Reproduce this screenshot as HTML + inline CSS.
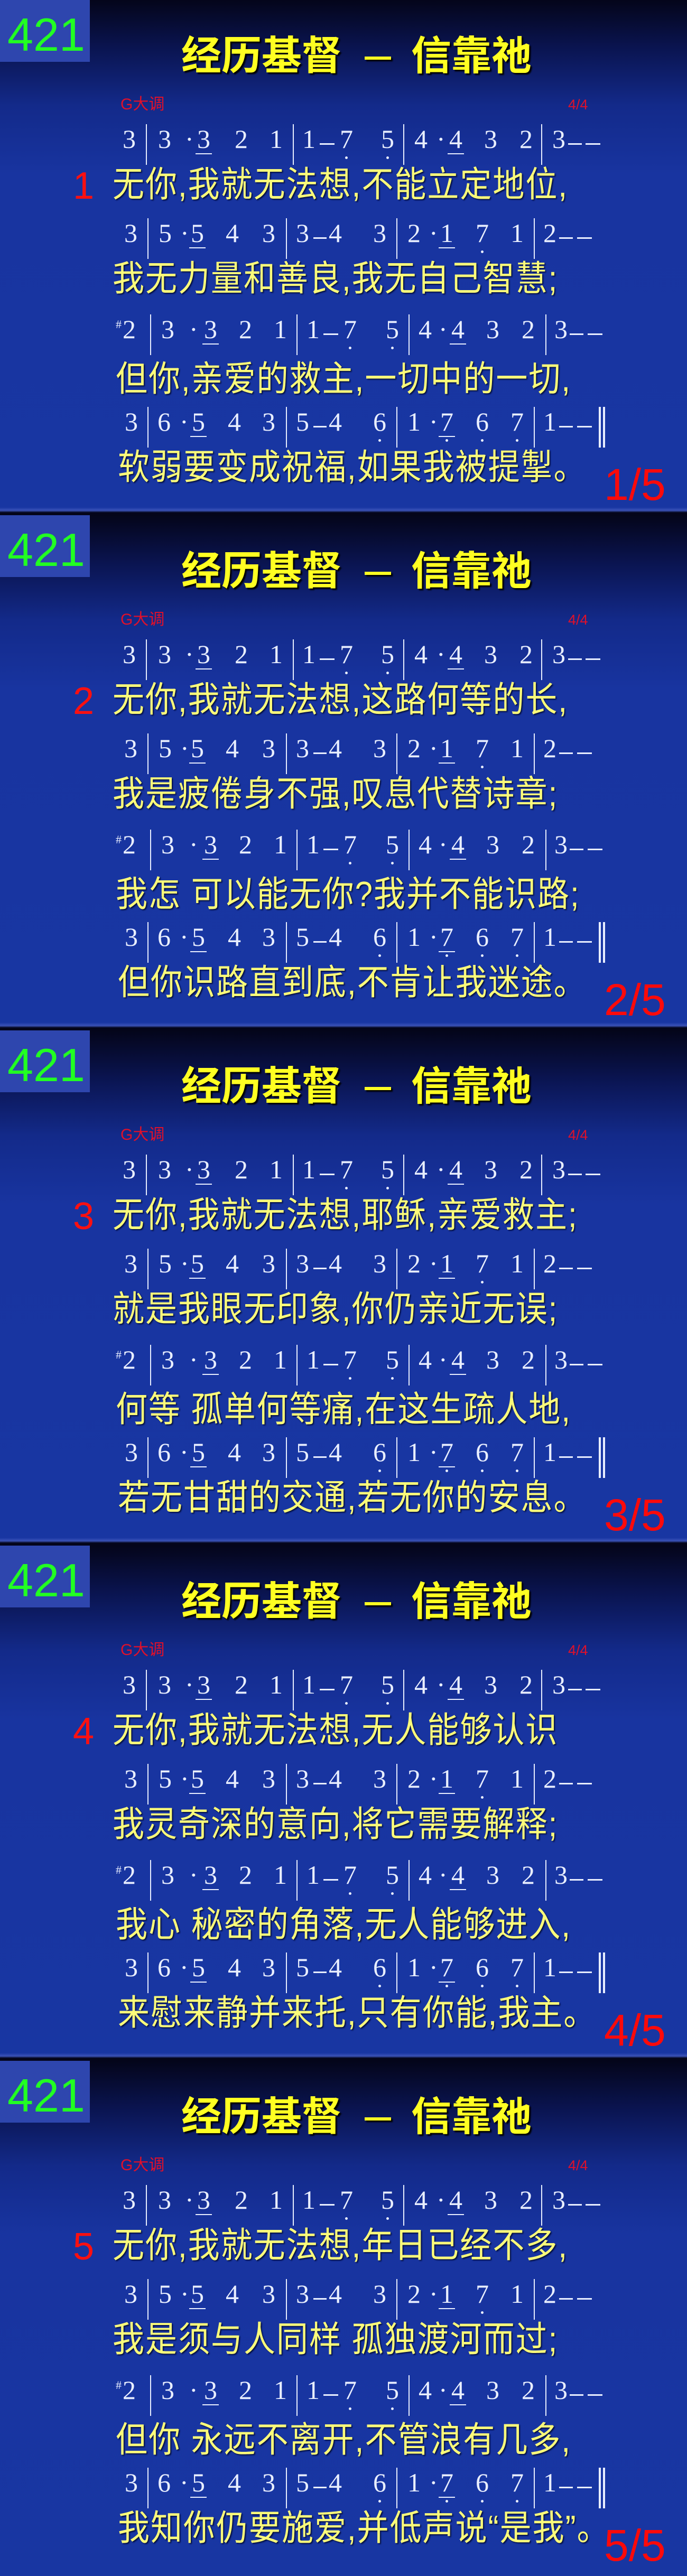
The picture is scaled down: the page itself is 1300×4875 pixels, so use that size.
<!DOCTYPE html>
<html><head><meta charset="utf-8">
<style>
*{margin:0;padding:0;box-sizing:border-box}
body{width:1300px;background:#1a34a0;overflow:hidden}
.s{position:relative;width:1300px;height:975px;overflow:hidden;background:linear-gradient(180deg,#04051a 0px,#0a1450 90px,#132a8a 200px,#1834a0 330px,#1836a2 960px,#3a52b8 966px,#04051a 970px)}
.s.last{background:linear-gradient(180deg,#04051a 0px,#0a1450 90px,#132a8a 200px,#1834a0 330px,#1836a2 975px)}
.box{position:absolute;left:0;top:0;width:170px;height:117px;background:#2e46ae}
.num{position:absolute;left:14px;top:16px;font:88px/100px "Liberation Sans",sans-serif;color:#22ff22}
.t{position:absolute;top:62px;font:bold 76px/90px "Liberation Sans","Noto Sans CJK SC",sans-serif;color:#ffff22;text-shadow:3px 3px 2px #000}
.td{position:absolute;left:690px;top:107px;width:50px;height:6px;background:#ffff22;box-shadow:3px 3px 2px #000}
.k{position:absolute;top:180px;font:30px/36px "Liberation Sans","Noto Sans CJK SC",sans-serif;color:#e0102a}
.r{position:absolute;left:0;width:1300px;height:80px}
.n{position:absolute;top:3px;font:50px/50px "Liberation Serif",serif;color:#e8eeff}
.u::after{content:"";position:absolute;left:-3px;right:-3px;top:52px;height:2px;background:#e8eeff}
.o::before{content:"";position:absolute;left:10px;top:58px;width:5px;height:5px;border-radius:50%;background:#e8eeff}
.b{position:absolute;top:0;width:2px;height:77px;background:#e8eeff}
.bb{position:absolute;top:0;width:4px;height:77px;background:#e8eeff}
.h{position:absolute;top:36px;height:3px;background:#e8eeff}
.sh{position:absolute;top:8px;font:22px/22px "Liberation Serif",serif;color:#e8eeff}
.l{position:absolute;font:60px/60px "Liberation Sans","Noto Sans CJK SC",sans-serif;color:#fbfb7a;letter-spacing:2px;text-shadow:2px 2px 2px #061040;white-space:nowrap;transform:scaleY(1.12);transform-origin:0 0}
.v{position:absolute;left:138px;top:312px;font:72px/80px "Liberation Sans",sans-serif;color:#ff1010}
.p{position:absolute;left:1143px;top:872px;font:84px/90px "Liberation Sans",sans-serif;color:#ff0a0a}
</style></head><body>

<!-- SLIDE 1 -->
<div class="s">
<div class="box"></div><div class="num">421</div>
<div class="t" style="left:343px">经历基督</div><div class="td"></div><div class="t" style="left:778px">信靠祂</div>
<div class="k" style="left:228px">G大调</div><div class="k" style="left:1075px;font-size:27px">4/4</div>
<div class="r" style="top:235px"><span class="n" style="left:232px">3</span><i class="b" style="left:276px"></i><span class="n" style="left:299px">3</span><span class="n" style="left:350px">·</span><span class="n u" style="left:373px">3</span><span class="n" style="left:444px">2</span><span class="n" style="left:510px">1</span><i class="b" style="left:554px"></i><span class="n" style="left:572px">1</span><i class="h" style="left:605px;width:28px"></i><span class="n o" style="left:643px">7</span><span class="n o" style="left:721px">5</span><i class="b" style="left:763px"></i><span class="n" style="left:784px">4</span><span class="n" style="left:826px">·</span><span class="n u" style="left:850px">4</span><span class="n" style="left:916px">3</span><span class="n" style="left:983px">2</span><i class="b" style="left:1024px"></i><span class="n" style="left:1045px">3</span><i class="h" style="left:1075px;width:26px"></i><i class="h" style="left:1108px;width:28px"></i></div>
<div class="v">1</div>
<div class="l" style="left:213px;top:316px">无你,我就无法想,不能立定地位,</div>
<div class="r" style="top:413px"><span class="n" style="left:235px">3</span><i class="b" style="left:279px"></i><span class="n" style="left:300px">5</span><span class="n" style="left:341px">·</span><span class="n u" style="left:361px">5</span><span class="n" style="left:427px">4</span><span class="n" style="left:496px">3</span><i class="b" style="left:541px"></i><span class="n" style="left:560px">3</span><i class="h" style="left:593px;width:25px"></i><span class="n" style="left:622px">4</span><span class="n" style="left:706px">3</span><i class="b" style="left:750px"></i><span class="n" style="left:771px">2</span><span class="n" style="left:812px">·</span><span class="n u" style="left:833px">1</span><span class="n o" style="left:900px">7</span><span class="n" style="left:966px">1</span><i class="b" style="left:1010px"></i><span class="n" style="left:1028px">2</span><i class="h" style="left:1058px;width:26px"></i><i class="h" style="left:1092px;width:28px"></i></div>
<div class="l" style="left:213px;top:494px">我无力量和善良,我无自己智慧;</div>
<div class="r" style="top:595px"><span class="sh" style="left:219px">#</span><span class="n" style="left:232px">2</span><i class="b" style="left:284px"></i><span class="n" style="left:305px">3</span><span class="n" style="left:358px">·</span><span class="n u" style="left:386px">3</span><span class="n" style="left:452px">2</span><span class="n" style="left:518px">1</span><i class="b" style="left:561px"></i><span class="n" style="left:580px">1</span><i class="h" style="left:612px;width:28px"></i><span class="n o" style="left:650px">7</span><span class="n o" style="left:730px">5</span><i class="b" style="left:773px"></i><span class="n" style="left:792px">4</span><span class="n" style="left:830px">·</span><span class="n u" style="left:854px">4</span><span class="n" style="left:920px">3</span><span class="n" style="left:987px">2</span><i class="b" style="left:1032px"></i><span class="n" style="left:1049px">3</span><i class="h" style="left:1078px;width:26px"></i><i class="h" style="left:1112px;width:28px"></i></div>
<div class="l" style="left:219px;top:684px">但你,亲爱的救主,一切中的一切,</div>
<div class="r" style="top:770px"><span class="n" style="left:236px">3</span><i class="b" style="left:279px"></i><span class="n" style="left:298px">6</span><span class="n" style="left:340px">·</span><span class="n u" style="left:363px">5</span><span class="n" style="left:431px">4</span><span class="n" style="left:496px">3</span><i class="b" style="left:541px"></i><span class="n" style="left:560px">5</span><i class="h" style="left:593px;width:25px"></i><span class="n" style="left:622px">4</span><span class="n o" style="left:706px">6</span><i class="b" style="left:750px"></i><span class="n" style="left:771px">1</span><span class="n" style="left:812px">·</span><span class="n u o" style="left:833px">7</span><span class="n o" style="left:900px">6</span><span class="n o" style="left:966px">7</span><i class="b" style="left:1010px"></i><span class="n" style="left:1028px">1</span><i class="h" style="left:1058px;width:26px"></i><i class="h" style="left:1092px;width:28px"></i><i class="bb" style="left:1133px"></i><i class="bb" style="left:1141px"></i></div>
<div class="l" style="left:223px;top:851px">软弱要变成祝福,如果我被提掣。</div>
<div class="p">1/5</div>
</div>

<!-- SLIDE 2 -->
<div class="s">
<div class="box"></div><div class="num">421</div>
<div class="t" style="left:343px">经历基督</div><div class="td"></div><div class="t" style="left:778px">信靠祂</div>
<div class="k" style="left:228px">G大调</div><div class="k" style="left:1075px;font-size:27px">4/4</div>
<div class="r" style="top:235px"><span class="n" style="left:232px">3</span><i class="b" style="left:276px"></i><span class="n" style="left:299px">3</span><span class="n" style="left:350px">·</span><span class="n u" style="left:373px">3</span><span class="n" style="left:444px">2</span><span class="n" style="left:510px">1</span><i class="b" style="left:554px"></i><span class="n" style="left:572px">1</span><i class="h" style="left:605px;width:28px"></i><span class="n o" style="left:643px">7</span><span class="n o" style="left:721px">5</span><i class="b" style="left:763px"></i><span class="n" style="left:784px">4</span><span class="n" style="left:826px">·</span><span class="n u" style="left:850px">4</span><span class="n" style="left:916px">3</span><span class="n" style="left:983px">2</span><i class="b" style="left:1024px"></i><span class="n" style="left:1045px">3</span><i class="h" style="left:1075px;width:26px"></i><i class="h" style="left:1108px;width:28px"></i></div>
<div class="v">2</div>
<div class="l" style="left:213px;top:316px">无你,我就无法想,这路何等的长,</div>
<div class="r" style="top:413px"><span class="n" style="left:235px">3</span><i class="b" style="left:279px"></i><span class="n" style="left:300px">5</span><span class="n" style="left:341px">·</span><span class="n u" style="left:361px">5</span><span class="n" style="left:427px">4</span><span class="n" style="left:496px">3</span><i class="b" style="left:541px"></i><span class="n" style="left:560px">3</span><i class="h" style="left:593px;width:25px"></i><span class="n" style="left:622px">4</span><span class="n" style="left:706px">3</span><i class="b" style="left:750px"></i><span class="n" style="left:771px">2</span><span class="n" style="left:812px">·</span><span class="n u" style="left:833px">1</span><span class="n o" style="left:900px">7</span><span class="n" style="left:966px">1</span><i class="b" style="left:1010px"></i><span class="n" style="left:1028px">2</span><i class="h" style="left:1058px;width:26px"></i><i class="h" style="left:1092px;width:28px"></i></div>
<div class="l" style="left:213px;top:494px">我是疲倦身不强,叹息代替诗章;</div>
<div class="r" style="top:595px"><span class="sh" style="left:219px">#</span><span class="n" style="left:232px">2</span><i class="b" style="left:284px"></i><span class="n" style="left:305px">3</span><span class="n" style="left:358px">·</span><span class="n u" style="left:386px">3</span><span class="n" style="left:452px">2</span><span class="n" style="left:518px">1</span><i class="b" style="left:561px"></i><span class="n" style="left:580px">1</span><i class="h" style="left:612px;width:28px"></i><span class="n o" style="left:650px">7</span><span class="n o" style="left:730px">5</span><i class="b" style="left:773px"></i><span class="n" style="left:792px">4</span><span class="n" style="left:830px">·</span><span class="n u" style="left:854px">4</span><span class="n" style="left:920px">3</span><span class="n" style="left:987px">2</span><i class="b" style="left:1032px"></i><span class="n" style="left:1049px">3</span><i class="h" style="left:1078px;width:26px"></i><i class="h" style="left:1112px;width:28px"></i></div>
<div class="l" style="left:219px;top:684px">我怎 可以能无你?我并不能识路;</div>
<div class="r" style="top:770px"><span class="n" style="left:236px">3</span><i class="b" style="left:279px"></i><span class="n" style="left:298px">6</span><span class="n" style="left:340px">·</span><span class="n u" style="left:363px">5</span><span class="n" style="left:431px">4</span><span class="n" style="left:496px">3</span><i class="b" style="left:541px"></i><span class="n" style="left:560px">5</span><i class="h" style="left:593px;width:25px"></i><span class="n" style="left:622px">4</span><span class="n o" style="left:706px">6</span><i class="b" style="left:750px"></i><span class="n" style="left:771px">1</span><span class="n" style="left:812px">·</span><span class="n u o" style="left:833px">7</span><span class="n o" style="left:900px">6</span><span class="n o" style="left:966px">7</span><i class="b" style="left:1010px"></i><span class="n" style="left:1028px">1</span><i class="h" style="left:1058px;width:26px"></i><i class="h" style="left:1092px;width:28px"></i><i class="bb" style="left:1133px"></i><i class="bb" style="left:1141px"></i></div>
<div class="l" style="left:223px;top:851px">但你识路直到底,不肯让我迷途。</div>
<div class="p">2/5</div>
</div>

<!-- SLIDE 3 -->
<div class="s">
<div class="box"></div><div class="num">421</div>
<div class="t" style="left:343px">经历基督</div><div class="td"></div><div class="t" style="left:778px">信靠祂</div>
<div class="k" style="left:228px">G大调</div><div class="k" style="left:1075px;font-size:27px">4/4</div>
<div class="r" style="top:235px"><span class="n" style="left:232px">3</span><i class="b" style="left:276px"></i><span class="n" style="left:299px">3</span><span class="n" style="left:350px">·</span><span class="n u" style="left:373px">3</span><span class="n" style="left:444px">2</span><span class="n" style="left:510px">1</span><i class="b" style="left:554px"></i><span class="n" style="left:572px">1</span><i class="h" style="left:605px;width:28px"></i><span class="n o" style="left:643px">7</span><span class="n o" style="left:721px">5</span><i class="b" style="left:763px"></i><span class="n" style="left:784px">4</span><span class="n" style="left:826px">·</span><span class="n u" style="left:850px">4</span><span class="n" style="left:916px">3</span><span class="n" style="left:983px">2</span><i class="b" style="left:1024px"></i><span class="n" style="left:1045px">3</span><i class="h" style="left:1075px;width:26px"></i><i class="h" style="left:1108px;width:28px"></i></div>
<div class="v">3</div>
<div class="l" style="left:213px;top:316px">无你,我就无法想,耶稣,亲爱救主;</div>
<div class="r" style="top:413px"><span class="n" style="left:235px">3</span><i class="b" style="left:279px"></i><span class="n" style="left:300px">5</span><span class="n" style="left:341px">·</span><span class="n u" style="left:361px">5</span><span class="n" style="left:427px">4</span><span class="n" style="left:496px">3</span><i class="b" style="left:541px"></i><span class="n" style="left:560px">3</span><i class="h" style="left:593px;width:25px"></i><span class="n" style="left:622px">4</span><span class="n" style="left:706px">3</span><i class="b" style="left:750px"></i><span class="n" style="left:771px">2</span><span class="n" style="left:812px">·</span><span class="n u" style="left:833px">1</span><span class="n o" style="left:900px">7</span><span class="n" style="left:966px">1</span><i class="b" style="left:1010px"></i><span class="n" style="left:1028px">2</span><i class="h" style="left:1058px;width:26px"></i><i class="h" style="left:1092px;width:28px"></i></div>
<div class="l" style="left:213px;top:494px">就是我眼无印象,你仍亲近无误;</div>
<div class="r" style="top:595px"><span class="sh" style="left:219px">#</span><span class="n" style="left:232px">2</span><i class="b" style="left:284px"></i><span class="n" style="left:305px">3</span><span class="n" style="left:358px">·</span><span class="n u" style="left:386px">3</span><span class="n" style="left:452px">2</span><span class="n" style="left:518px">1</span><i class="b" style="left:561px"></i><span class="n" style="left:580px">1</span><i class="h" style="left:612px;width:28px"></i><span class="n o" style="left:650px">7</span><span class="n o" style="left:730px">5</span><i class="b" style="left:773px"></i><span class="n" style="left:792px">4</span><span class="n" style="left:830px">·</span><span class="n u" style="left:854px">4</span><span class="n" style="left:920px">3</span><span class="n" style="left:987px">2</span><i class="b" style="left:1032px"></i><span class="n" style="left:1049px">3</span><i class="h" style="left:1078px;width:26px"></i><i class="h" style="left:1112px;width:28px"></i></div>
<div class="l" style="left:219px;top:684px">何等 孤单何等痛,在这生疏人地,</div>
<div class="r" style="top:770px"><span class="n" style="left:236px">3</span><i class="b" style="left:279px"></i><span class="n" style="left:298px">6</span><span class="n" style="left:340px">·</span><span class="n u" style="left:363px">5</span><span class="n" style="left:431px">4</span><span class="n" style="left:496px">3</span><i class="b" style="left:541px"></i><span class="n" style="left:560px">5</span><i class="h" style="left:593px;width:25px"></i><span class="n" style="left:622px">4</span><span class="n o" style="left:706px">6</span><i class="b" style="left:750px"></i><span class="n" style="left:771px">1</span><span class="n" style="left:812px">·</span><span class="n u o" style="left:833px">7</span><span class="n o" style="left:900px">6</span><span class="n o" style="left:966px">7</span><i class="b" style="left:1010px"></i><span class="n" style="left:1028px">1</span><i class="h" style="left:1058px;width:26px"></i><i class="h" style="left:1092px;width:28px"></i><i class="bb" style="left:1133px"></i><i class="bb" style="left:1141px"></i></div>
<div class="l" style="left:223px;top:851px">若无甘甜的交通,若无你的安息。</div>
<div class="p">3/5</div>
</div>

<!-- SLIDE 4 -->
<div class="s">
<div class="box"></div><div class="num">421</div>
<div class="t" style="left:343px">经历基督</div><div class="td"></div><div class="t" style="left:778px">信靠祂</div>
<div class="k" style="left:228px">G大调</div><div class="k" style="left:1075px;font-size:27px">4/4</div>
<div class="r" style="top:235px"><span class="n" style="left:232px">3</span><i class="b" style="left:276px"></i><span class="n" style="left:299px">3</span><span class="n" style="left:350px">·</span><span class="n u" style="left:373px">3</span><span class="n" style="left:444px">2</span><span class="n" style="left:510px">1</span><i class="b" style="left:554px"></i><span class="n" style="left:572px">1</span><i class="h" style="left:605px;width:28px"></i><span class="n o" style="left:643px">7</span><span class="n o" style="left:721px">5</span><i class="b" style="left:763px"></i><span class="n" style="left:784px">4</span><span class="n" style="left:826px">·</span><span class="n u" style="left:850px">4</span><span class="n" style="left:916px">3</span><span class="n" style="left:983px">2</span><i class="b" style="left:1024px"></i><span class="n" style="left:1045px">3</span><i class="h" style="left:1075px;width:26px"></i><i class="h" style="left:1108px;width:28px"></i></div>
<div class="v">4</div>
<div class="l" style="left:213px;top:316px">无你,我就无法想,无人能够认识</div>
<div class="r" style="top:413px"><span class="n" style="left:235px">3</span><i class="b" style="left:279px"></i><span class="n" style="left:300px">5</span><span class="n" style="left:341px">·</span><span class="n u" style="left:361px">5</span><span class="n" style="left:427px">4</span><span class="n" style="left:496px">3</span><i class="b" style="left:541px"></i><span class="n" style="left:560px">3</span><i class="h" style="left:593px;width:25px"></i><span class="n" style="left:622px">4</span><span class="n" style="left:706px">3</span><i class="b" style="left:750px"></i><span class="n" style="left:771px">2</span><span class="n" style="left:812px">·</span><span class="n u" style="left:833px">1</span><span class="n o" style="left:900px">7</span><span class="n" style="left:966px">1</span><i class="b" style="left:1010px"></i><span class="n" style="left:1028px">2</span><i class="h" style="left:1058px;width:26px"></i><i class="h" style="left:1092px;width:28px"></i></div>
<div class="l" style="left:213px;top:494px">我灵奇深的意向,将它需要解释;</div>
<div class="r" style="top:595px"><span class="sh" style="left:219px">#</span><span class="n" style="left:232px">2</span><i class="b" style="left:284px"></i><span class="n" style="left:305px">3</span><span class="n" style="left:358px">·</span><span class="n u" style="left:386px">3</span><span class="n" style="left:452px">2</span><span class="n" style="left:518px">1</span><i class="b" style="left:561px"></i><span class="n" style="left:580px">1</span><i class="h" style="left:612px;width:28px"></i><span class="n o" style="left:650px">7</span><span class="n o" style="left:730px">5</span><i class="b" style="left:773px"></i><span class="n" style="left:792px">4</span><span class="n" style="left:830px">·</span><span class="n u" style="left:854px">4</span><span class="n" style="left:920px">3</span><span class="n" style="left:987px">2</span><i class="b" style="left:1032px"></i><span class="n" style="left:1049px">3</span><i class="h" style="left:1078px;width:26px"></i><i class="h" style="left:1112px;width:28px"></i></div>
<div class="l" style="left:219px;top:684px">我心 秘密的角落,无人能够进入,</div>
<div class="r" style="top:770px"><span class="n" style="left:236px">3</span><i class="b" style="left:279px"></i><span class="n" style="left:298px">6</span><span class="n" style="left:340px">·</span><span class="n u" style="left:363px">5</span><span class="n" style="left:431px">4</span><span class="n" style="left:496px">3</span><i class="b" style="left:541px"></i><span class="n" style="left:560px">5</span><i class="h" style="left:593px;width:25px"></i><span class="n" style="left:622px">4</span><span class="n o" style="left:706px">6</span><i class="b" style="left:750px"></i><span class="n" style="left:771px">1</span><span class="n" style="left:812px">·</span><span class="n u o" style="left:833px">7</span><span class="n o" style="left:900px">6</span><span class="n o" style="left:966px">7</span><i class="b" style="left:1010px"></i><span class="n" style="left:1028px">1</span><i class="h" style="left:1058px;width:26px"></i><i class="h" style="left:1092px;width:28px"></i><i class="bb" style="left:1133px"></i><i class="bb" style="left:1141px"></i></div>
<div class="l" style="left:223px;top:851px">来慰来静并来托,只有你能,我主。</div>
<div class="p">4/5</div>
</div>

<!-- SLIDE 5 -->
<div class="s last">
<div class="box"></div><div class="num">421</div>
<div class="t" style="left:343px">经历基督</div><div class="td"></div><div class="t" style="left:778px">信靠祂</div>
<div class="k" style="left:228px">G大调</div><div class="k" style="left:1075px;font-size:27px">4/4</div>
<div class="r" style="top:235px"><span class="n" style="left:232px">3</span><i class="b" style="left:276px"></i><span class="n" style="left:299px">3</span><span class="n" style="left:350px">·</span><span class="n u" style="left:373px">3</span><span class="n" style="left:444px">2</span><span class="n" style="left:510px">1</span><i class="b" style="left:554px"></i><span class="n" style="left:572px">1</span><i class="h" style="left:605px;width:28px"></i><span class="n o" style="left:643px">7</span><span class="n o" style="left:721px">5</span><i class="b" style="left:763px"></i><span class="n" style="left:784px">4</span><span class="n" style="left:826px">·</span><span class="n u" style="left:850px">4</span><span class="n" style="left:916px">3</span><span class="n" style="left:983px">2</span><i class="b" style="left:1024px"></i><span class="n" style="left:1045px">3</span><i class="h" style="left:1075px;width:26px"></i><i class="h" style="left:1108px;width:28px"></i></div>
<div class="v">5</div>
<div class="l" style="left:213px;top:316px">无你,我就无法想,年日已经不多,</div>
<div class="r" style="top:413px"><span class="n" style="left:235px">3</span><i class="b" style="left:279px"></i><span class="n" style="left:300px">5</span><span class="n" style="left:341px">·</span><span class="n u" style="left:361px">5</span><span class="n" style="left:427px">4</span><span class="n" style="left:496px">3</span><i class="b" style="left:541px"></i><span class="n" style="left:560px">3</span><i class="h" style="left:593px;width:25px"></i><span class="n" style="left:622px">4</span><span class="n" style="left:706px">3</span><i class="b" style="left:750px"></i><span class="n" style="left:771px">2</span><span class="n" style="left:812px">·</span><span class="n u" style="left:833px">1</span><span class="n o" style="left:900px">7</span><span class="n" style="left:966px">1</span><i class="b" style="left:1010px"></i><span class="n" style="left:1028px">2</span><i class="h" style="left:1058px;width:26px"></i><i class="h" style="left:1092px;width:28px"></i></div>
<div class="l" style="left:213px;top:494px">我是须与人同样 孤独渡河而过;</div>
<div class="r" style="top:595px"><span class="sh" style="left:219px">#</span><span class="n" style="left:232px">2</span><i class="b" style="left:284px"></i><span class="n" style="left:305px">3</span><span class="n" style="left:358px">·</span><span class="n u" style="left:386px">3</span><span class="n" style="left:452px">2</span><span class="n" style="left:518px">1</span><i class="b" style="left:561px"></i><span class="n" style="left:580px">1</span><i class="h" style="left:612px;width:28px"></i><span class="n o" style="left:650px">7</span><span class="n o" style="left:730px">5</span><i class="b" style="left:773px"></i><span class="n" style="left:792px">4</span><span class="n" style="left:830px">·</span><span class="n u" style="left:854px">4</span><span class="n" style="left:920px">3</span><span class="n" style="left:987px">2</span><i class="b" style="left:1032px"></i><span class="n" style="left:1049px">3</span><i class="h" style="left:1078px;width:26px"></i><i class="h" style="left:1112px;width:28px"></i></div>
<div class="l" style="left:219px;top:684px">但你 永远不离开,不管浪有几多,</div>
<div class="r" style="top:770px"><span class="n" style="left:236px">3</span><i class="b" style="left:279px"></i><span class="n" style="left:298px">6</span><span class="n" style="left:340px">·</span><span class="n u" style="left:363px">5</span><span class="n" style="left:431px">4</span><span class="n" style="left:496px">3</span><i class="b" style="left:541px"></i><span class="n" style="left:560px">5</span><i class="h" style="left:593px;width:25px"></i><span class="n" style="left:622px">4</span><span class="n o" style="left:706px">6</span><i class="b" style="left:750px"></i><span class="n" style="left:771px">1</span><span class="n" style="left:812px">·</span><span class="n u o" style="left:833px">7</span><span class="n o" style="left:900px">6</span><span class="n o" style="left:966px">7</span><i class="b" style="left:1010px"></i><span class="n" style="left:1028px">1</span><i class="h" style="left:1058px;width:26px"></i><i class="h" style="left:1092px;width:28px"></i><i class="bb" style="left:1133px"></i><i class="bb" style="left:1141px"></i></div>
<div class="l" style="left:223px;top:851px">我知你仍要施爱,并低声说“是我”。</div>
<div class="p">5/5</div>
</div>

</body></html>
